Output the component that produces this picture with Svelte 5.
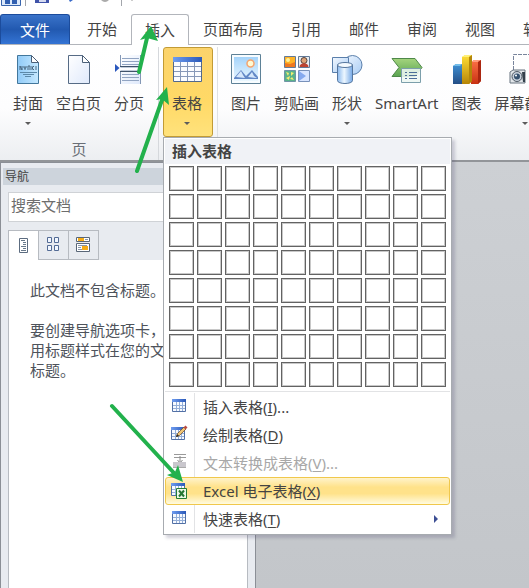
<script>
  const tabs = ['开始', '插入', '页面布局', '引用', '邮件', '审阅', '视图', '软件'];
  const pageTools = [
    { icon: 'cover', label: '封面', drop: true },
    { icon: 'blank', label: '空白页' },
    { icon: 'break', label: '分页' }
  ];
  const artTools = [
    { icon: 'picture', label: '图片' },
    { icon: 'clip', label: '剪贴画' },
    { icon: 'shapes', label: '形状', drop: true },
    { icon: 'smart', label: 'SmartArt' },
    { icon: 'chart', label: '图表' },
    { icon: 'shot', label: '屏幕截图', drop: true }
  ];
  const items = [
    { icon: 'grid', label: '插入表格', key: 'I', tail: '...' },
    { icon: 'draw', label: '绘制表格', key: 'D' },
    { icon: 'convert', label: '文本转换成表格', key: 'V', tail: '...', disabled: true },
    { icon: 'excel', label: 'Excel 电子表格', key: 'X', active: true },
    { icon: 'grid', label: '快速表格', key: 'T', sub: true }
  ];
  const cells = Array.from({ length: 80 }, (_, i) => i);
</script>

{#snippet toolIcon(name)}
  <svg class="tool-icon" viewBox="0 0 32 32" aria-hidden="true">
    {#if name === 'cover' || name === 'blank'}
      <path d="M5.500 1.500h14l7 7v21h-21z" fill={name === 'cover' ? 'url(#coverFill)' : 'url(#pageFill)'} stroke={name === 'cover' ? '#42779c' : '#566b85'} />
      <path d="M19.500 1.500v7h7z" fill="#fff" stroke="#4b6078" />
      {#if name === 'cover'}
        <path d="M8 16v-4l2 4v-4M12 12v2h2v-2M13 14v2M16 16v-4h2v4M20 16v-4M20 14l2-2M20 14l2 2M24 16v-4" fill="none" stroke="#49667f" />
        <path d="M8 18.500h17M11 20.500h11M13 22.500h6" stroke="#5c89a9" />
      {/if}
    {:else if name === 'break'}
      <path d="M7.500 1v12h20V1M7.500 30V17h20v13" fill="url(#pageFill)" stroke="#8397b5" />
      <path d="M7 12.500h21M7 17.500h21" stroke="#40536b" />
      <path d="M9 4.500h17M9 7.500h17M9 10.500h17M9 20.500h17M9 23.500h17M9 26.500h17" stroke="#91a4c2" />
      <path d="M2 10v8l4.500-4z" fill="#2a57bd" />
    {:else if name === 'table'}
      <path d="M2.500 3.500h28v24h-28z" fill="#fbfcff" stroke="#51688d" />
      <path d="M2 3h29v5H2z" fill="url(#blueBar)" />
      <path d="M9.500 8v19M16.500 8v19M23.500 8v19M3 12.500h27M3 17.500h27M3 22.500h27" stroke="#8798b8" />
    {:else if name === 'picture'}
      <path d="M1.500.5h29v29h-29z" fill="#f7fcff" stroke="#5d8197" />
      <path d="M4 3h24v24H4z" fill="url(#skyFill)" />
      <circle cx="20.500" cy="9.500" r="3.500" fill="#fffad4" stroke="#f5a46e" stroke-width="1.500" />
      <path d="M4 24l7-8 5 6 6-6 6 7v2H4z" fill="#6288c6" />
      <path d="M6 23l5-6 2 4 2 3M18 23l4-5 2 4 3 2z" fill="#d5e7fb" />
    {:else if name === 'clip'}
      <path d="M3.500 2.500h11v11h-11z" fill="#ffb326" stroke="#627a98" /><path d="M4 9l5 1 5-2v5H4z" fill="#ee7820" /><circle cx="7" cy="6" r="2" fill="#fff19b" />
      <path d="M17.500 2.500h11v11h-11z" fill="#e9edf0" stroke="#627a98" /><circle cx="23" cy="6.500" r="3" fill="#dfa174" stroke="#52423d" /><path d="M18.500 13c0-5 9-5 9 0z" fill="#bd4432" />
      <path d="M3.500 16.500h11v11h-11z" fill="#59b28b" stroke="#7095a6" /><path d="M5 18l3 1-1 3zM10 18l3 1-3 3zM5 24l4-2-1 4zM11 23l2 3-4-1z" fill="#f5ed70" />
      <path d="M17.500 16.500h11v11h-11z" fill="#d8e5ff" stroke="#7891ba" /><path d="M18 17l7 5-7 5z" fill="#85a9ef" />
    {:else if name === 'shapes'}
      <circle cx="21.500" cy="11" r="9.500" fill="url(#shapeFill)" stroke="#5a7fab" />
      <path d="M1.500 3.500h16v15h-16z" fill="url(#shapeFill)" stroke="#5a7fab" />
      <path d="M6.500 11v15.500c0 4 15 4 15 0V11z" fill="url(#tubeFill)" stroke="#55769e" />
      <ellipse cx="14" cy="11" rx="7.500" ry="2.500" fill="#f4faff" stroke="#55769e" />
    {:else if name === 'smart'}
      <path d="M1 4.500h23l7 9-7 9H1l7-9z" fill="url(#greenFill)" stroke="#4e8849" />
      <path d="M10.500 14.500h19v14h-19z" fill="#edf7f2" fill-opacity=".88" stroke="#7c9fab" />
      <path d="M14 18.500h2M14 21.500h2M14 24.500h2M18 18.500h8M18 21.500h8M18 24.500h8" stroke="#4b6e98" />
    {:else if name === 'chart'}
      <path d="M2 12l3-2h6v20H2z" fill="url(#chartBlue)" /><path d="M2 12l3-2h6l-2 2z" fill="#72bce8" />
      <path d="M20 8l3-2h7v21l-3 3h-7z" fill="url(#chartRed)" /><path d="M20 8l3-2h7l-3 2z" fill="#ff9c7d" /><path d="M27 8l3-2v21l-3 3z" fill="#aa2610" />
      <path d="M11 3l3-2h7v26l-3 3h-7z" fill="url(#chartGold)" /><path d="M11 3l3-2h7l-3 2z" fill="#fff078" /><path d="M18 3l3-2v26l-3 3z" fill="#b3860b" />
    {:else if name === 'shot'}
      <path d="M4.500 16V.5H32M23 22.500h8" fill="none" stroke="#78849b" stroke-dasharray="4 1" />
      <path d="M1 18l3-2h12v13H1z" fill="#e2e6e9" stroke="#66727e" /><circle cx="8" cy="22.500" r="5" fill="#c8d1db" stroke="#4e5965" /><circle cx="8" cy="22.500" r="3" fill="#35516e" /><circle cx="7" cy="21.500" r="1" fill="#fff" /><path d="M13 18h3v10h-2z" fill="#33404b" />
    {/if}
  </svg>
{/snippet}

{#snippet itemIcon(name)}
  <svg class="item-icon" viewBox="0 0 18 18" aria-hidden="true">
    {#if name === 'convert'}
      <path d="M4 1.500h12M4 4.500h12" stroke="#999" /><path d="M10 3v7M7.500 7l2.500 3 2.500-3" stroke="#888" fill="none" />
      <path d="M3 9h13v6H3z" fill="#c9c7cd" /><path d="M3 14.500h13" stroke="#aaa" />
    {:else if name === 'grid'}
      <path d="M2.500 2.500h13v12h-13z" fill="#f7faff" stroke="#5270a5" />
      <path d="M2 2h14v3H2z" fill="url(#blueBar)" />
      <path d="M6.500 5v9M9.500 5v9M12.500 5v9M3 8.500h12M3 11.500h12" stroke="#94afd8" />
    {:else}
      <path d="M1.500 2.500h13v12h-13z" fill="#f7faff" stroke="#5270a5" />
      <path d="M1 2h14v3H1z" fill="url(#blueBar)" />
      <path d="M5.500 5v9M8.500 5v9M11.500 5v9M2 8.500h12M2 11.500h12" stroke="#94afd8" />
      {#if name === 'draw'}
        <path d="M6.500 11.500l1-3L14 2l2 2-6.500 6.500z" fill="#f0c576" stroke="#654322" stroke-width=".7" /><path d="M13.500 2.500L15.500.5l2 2-2 2z" fill="#b84a43" /><path d="M6 12l1-3 2 2z" fill="#30291f" />
      {:else}
        <path d="M6.500 7.500h10v10h-10z" fill="#eff9e9" stroke="#257c33" /><path d="M9 9.500l5 6M14 9.500l-5 6" stroke="#267632" stroke-width="2" />
      {/if}
    {/if}
  </svg>
{/snippet}

{#snippet tool(t)}
  <button class="tool">
    {@render toolIcon(t.icon)}
    <span>{t.label}</span>
    {#if t.drop}<i class="caret"></i>{/if}
  </button>
{/snippet}

<svg class="defs" aria-hidden="true">
  <defs>
    <linearGradient id="coverFill"><stop stop-color="#91cbf8" /><stop offset="1" stop-color="#c6e9ff" /></linearGradient>
    <linearGradient id="pageFill" x2="1" y2="1"><stop stop-color="#fff" /><stop offset="1" stop-color="#dfe9fb" /></linearGradient>
    <linearGradient id="blueBar"><stop stop-color="#6f9df0" /><stop offset="1" stop-color="#2a58b8" /></linearGradient>
    <linearGradient id="skyFill" x2="0" y2="1"><stop stop-color="#a4d3fa" /><stop offset="1" stop-color="#eaf7ff" /></linearGradient>
    <linearGradient id="shapeFill" x2="1" y2="1"><stop stop-color="#f2f8ff" /><stop offset="1" stop-color="#a9ccf4" /></linearGradient>
    <linearGradient id="tubeFill"><stop stop-color="#8bb9ee" /><stop offset=".45" stop-color="#edf7ff" /><stop offset="1" stop-color="#75a8e6" /></linearGradient>
    <linearGradient id="greenFill" x2="0" y2="1"><stop stop-color="#a4d47d" /><stop offset="1" stop-color="#5aa451" /></linearGradient>
    <linearGradient id="chartBlue" x2="0" y2="1"><stop stop-color="#3f91d5" /><stop offset="1" stop-color="#254e85" /></linearGradient>
    <linearGradient id="chartGold" x2="0" y2="1"><stop stop-color="#ffdf38" /><stop offset="1" stop-color="#b68507" /></linearGradient>
    <linearGradient id="chartRed" x2="0" y2="1"><stop stop-color="#fc7147" /><stop offset="1" stop-color="#c83212" /></linearGradient>
  </defs>
</svg>

<div class="app">
  <header class="titlebar">
    <svg width="140" height="7" viewBox="0 0 140 7" aria-hidden="true">
      <path d="M1.500 0v5.500h19V0" fill="#dce9fa" stroke="#3965ad" /><path d="M5 0h5v4H5zM12 0h5v4h-5z" fill="#315fb0" />
      <path d="M25.500 0v6M121.500 0v6" stroke="#a3a6ac" />
      <path d="M35 0h14v3H35z" fill="#4053a9" /><path d="M39 0h7v2h-7z" fill="#d5daf0" />
      <path d="M69 0h4l-3 2z" fill="#3768c8" /><path d="M101 0h8q-4 4-8 0" fill="#aaa" /><path d="M131 0h2v1h-2z" fill="#ccc" />
    </svg>
  </header>

  <nav class="tabs" aria-label="功能区">
    <button class="file">文件</button>
    {#each tabs as t}
      <button class="tab" class:current={t === '插入'}>{t}</button>
    {/each}
  </nav>

  <section class="ribbon">
    <div class="group pages">
      <div class="tools">{#each pageTools as t}{@render tool(t)}{/each}</div>
      <div class="caption">页</div>
    </div>
    <div class="group tables">
      <button class="tool pressed" aria-expanded="true">
        {@render toolIcon('table')}
        <span>表格</span>
        <i class="caret"></i>
      </button>
      <div class="menu" role="menu">
        <h2>插入表格</h2>
        <div class="cells">
          {#each cells as c}<button class="cell" aria-label="{(c % 10) + 1} x {Math.floor(c / 10) + 1}"></button>{/each}
        </div>
        <div class="items">
          {#each items as it}
            <button class="item" class:active={it.active} disabled={it.disabled} role="menuitem">
              <span class="slot">{@render itemIcon(it.icon)}</span>
              <span class="name">{it.label}(<u>{it.key}</u>){it.tail ?? ''}</span>
              {#if it.sub}<i class="sub"></i>{/if}
            </button>
          {/each}
        </div>
      </div>
    </div>
    <div class="group art">
      <div class="tools">{#each artTools as t}{@render tool(t)}{/each}</div>
    </div>
  </section>

  <main>
    <aside>
      <h1>导航</h1>
      <input type="text" placeholder="搜索文档" aria-label="搜索文档" />
      <div class="views">
        <button class="view on" aria-label="标题">
          <svg width="16" height="16" viewBox="0 0 16 16"><path d="M4.500.5h8v14h-8z" fill="#fff" stroke="#5c6c80" /><path d="M6 2.500h4M8 4.500h3M8 6.500h3M6 8.500h5M8 10.500h3M6 12.500h5" stroke="#68798b" /></svg>
        </button>
        <button class="view" aria-label="页面">
          <svg width="16" height="16" viewBox="0 0 16 16"><path d="M2.500.5h4v5h-4zM9.500.5h4v5h-4zM2.500 8.500h4v5h-4zM9.500 8.500h4v5h-4z" fill="#f2f7ff" stroke="#536b95" /></svg>
        </button>
        <button class="view" aria-label="结果">
          <svg width="16" height="16" viewBox="0 0 16 16"><path d="M1.500.5h13v4h-13zM1.500 6.500h13v8h-13z" fill="#fff" stroke="#596677" /><path d="M10 2.500h3M3 8.500h9M3 10.500h3M3 12.500h9" stroke="#8997aa" /><path d="M3 1h6v3H3zM7 9h6v4H7z" fill="#f5ac16" /></svg>
        </button>
      </div>
      <div class="outline">
        <p>此文档不包含标题。</p>
        <p>要创建导航选项卡，请通过应用标题样式在您的文档中创建标题。</p>
      </div>
    </aside>
    <div class="canvas"></div>
  </main>

  <svg class="arrows" width="200" height="490" viewBox="0 0 200 490" aria-hidden="true">
    <g stroke="#22b14c" stroke-width="4" stroke-linecap="round"><path d="M139 72L147 38M137 171L162 100M112 406L174 473" /></g>
    <g fill="#22b14c"><path d="M151 26L140 40l7-2 11 3zM167 87L156 100l6-1 7 6zM183 482L167 475l8-3 3-7z" /></g>
  </svg>
</div>

<style>
  :global(body) { margin: 0; }
  * { box-sizing: border-box; }
  button { font: inherit; color: inherit; margin: 0; padding: 0; border: 0; background: none; }
  .defs { position: absolute; width: 0; height: 0; }
  .app {
    position: relative; display: flex; flex-direction: column; height: 100vh; overflow: hidden;
    background: #fff; color: #444;
    font: 15px/20px "Noto Sans", "Noto Sans CJK SC", sans-serif;
  }
  .titlebar { height: 14px; flex: none; }
  .titlebar svg { display: block; }

  .tabs { display: flex; flex: none; height: 31px; border-bottom: 1px solid #b2b5bb; }
  .tabs button { flex: none; height: 30px; padding: 0 14px; }
  .tabs .file {
    width: 70px; margin-right: 3px; color: #fff; border: 1px solid #1c4c9c; border-bottom: 0; border-radius: 3px 3px 0 0;
    background: linear-gradient(#3a73c9, #2259b0 50%, #3474d4);
  }
  .tabs .current { height: 31px; padding: 0 13px; border: 1px solid #b2b5bb; border-bottom: 0; border-radius: 3px 3px 0 0; background: #fff; }

  .ribbon {
    display: flex; flex: none; height: 117px; padding-top: 2px;
    background: linear-gradient(#fff, #fdfdfe 55%, #eceef1); border-bottom: 2px solid #929599;
  }
  .group { display: flex; flex: none; flex-direction: column; }
  .pages { width: 159px; padding-left: 6px; border-right: 1px solid #d5d8dc; }
  .tables { position: relative; width: 59px; padding-left: 4px; border-right: 1px solid #dfe1e4; }
  .art { padding-left: 6px; }
  .tools { display: flex; }
  .tool { display: flex; flex: none; flex-direction: column; align-items: center; height: 90px; padding: 7px 6px 0; }
  .tool-icon { width: 32px; height: 32px; margin-bottom: 7px; }
  .tool span { white-space: nowrap; }
  .caret { margin-top: 9px; border: 3px solid transparent; border-top-color: #5c5c5c; border-bottom: 0; }
  .pressed { width: 50px; padding: 6px 7px 0 5px; border: 1px solid #c29b35; border-radius: 3px; background: linear-gradient(#fbd36c, #ffd966 60%, #ffe27c); }
  .caption { padding: 2px 6px 0 0; text-align: center; color: #696e76; }

  .menu {
    position: absolute; z-index: 2; top: 90px; left: 4px; width: 289px; padding: 1px;
    border: 1px solid #a7abb0; background: #fff; box-shadow: 3px 3px 3px rgba(80, 75, 110, .25);
  }
  .menu h2 { margin: 0; padding: 1px 7px 0; height: 25px; font-size: 15px; line-height: 22px; font-weight: 700; background: #f0f2f6; }
  .cells { display: grid; grid-template-columns: repeat(10, 25px); gap: 3px; padding: 2px 4px 4px; border-bottom: 1px solid #e2e3e5; }
  .cell { height: 25px; border: 1px solid #636363; background: #fff; box-shadow: inset 0 0 0 1px #c8c8c8; }
  .items { padding-top: 1px; }
  .item { display: flex; align-items: center; width: 100%; height: 28px; border: 1px solid transparent; border-radius: 3px; text-align: left; }
  .slot { display: flex; align-items: center; width: 29px; height: 28px; padding: 0 0 2px 4px; border-right: 1px solid #e2e3e5; }
  .item-icon { width: 18px; height: 18px; }
  .name { flex: 1; padding-left: 8px; }
  .item u { text-underline-offset: 2px; }
  .item:disabled { color: #a8a8a8; }
  .active { border-color: #f0c84c; background: linear-gradient(#fff3cb, #ffe28a 35%, #ffe28a 60%, #fffbe0); }
  .active .slot { border-color: transparent; }
  .sub { margin-right: 11px; border: 4px solid transparent; border-left-color: #3d4f94; border-right: 0; }

  main { display: flex; flex: 1; min-height: 0; }
  aside { display: flex; flex: none; flex-direction: column; width: 256px; padding: 5px 7px 0; border: 1px solid #8b8f96; border-width: 1px 1px 0; background: #e8ebf0; }
  h1 { margin: 0 -5px 7px; padding-left: 2px; font-size: 12px; line-height: 17px; font-weight: 400; background: #cdd4dc; }
  input { height: 30px; padding: 0 2px 4px; border: 1px solid #cfd2d6; background: #fff; font: inherit; }
  input::placeholder { color: #6d6d6d; opacity: 1; }
  .views { display: flex; margin-top: 8px; }
  .view { display: grid; place-items: center; width: 30px; height: 30px; padding-right: 2px; border: 1px solid #b7bbc1; border-left: 0; }
  .view.on { width: 31px; border-left: 1px solid #b7bbc1; border-bottom: 0; background: #fff; }
  .outline { flex: 1; padding: 20px 21px; border: 1px solid #b7bbc1; border-width: 0 1px; background: #fff; color: #4e535b; }
  .outline p { margin: 0 0 20px; }
  .canvas { flex: 1; background: linear-gradient(#cdd0d4, #c3c6ca); }

  .arrows { position: absolute; z-index: 3; top: 0; left: 0; pointer-events: none; }
</style>
